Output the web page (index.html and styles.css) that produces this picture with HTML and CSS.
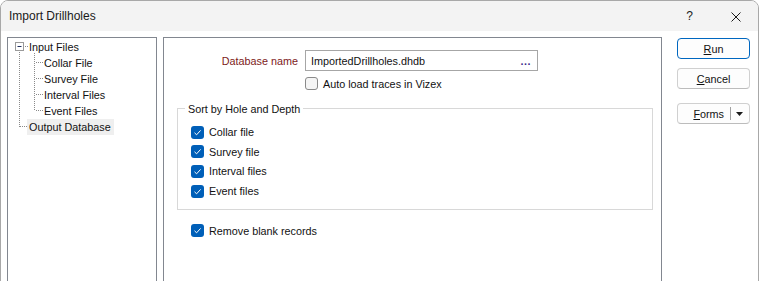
FILE: index.html
```html
<!DOCTYPE html>
<html>
<head>
<meta charset="utf-8">
<link rel="stylesheet" href="styles.css">
</head>
<body>
<div class="window">
  <div class="titlebar">
    <span class="title">Import Drillholes</span>
    <span class="help">?</span>
    <svg class="close" width="10" height="10" viewBox="0 0 10 10"><path d="M0.5 0.5 L9.5 9.5 M9.5 0.5 L0.5 9.5" stroke="#1a1a1a" stroke-width="1"/></svg>
  </div>
  <div class="content">
    <div class="tree">
      <svg class="tree-lines" width="140" height="100" viewBox="0 0 140 100">
        <rect x="7.5" y="4.5" width="8" height="8" fill="#fff" stroke="#9a9a9a"/>
        <path d="M9.5 8.5 H13.5" stroke="#1f2f5f"/>
        <g stroke="#8a8a8a" stroke-dasharray="1 1" fill="none">
          <path d="M17 8.5 H21"/>
          <path d="M11.5 14 V89"/>
          <path d="M12 88.5 H19"/>
          <path d="M26.5 15 V73"/>
          <path d="M28 24.5 H35"/>
          <path d="M28 40.5 H35"/>
          <path d="M28 56.5 H35"/>
          <path d="M28 72.5 H35"/>
        </g>
      </svg>
      <div class="node root">Input Files</div>
      <div class="node child">Collar File</div>
      <div class="node child">Survey File</div>
      <div class="node child">Interval Files</div>
      <div class="node child">Event Files</div>
      <div class="node root"><span class="selected">Output Database</span></div>
    </div>
    <div class="main">
      <div class="db-row">
        <span class="db-label">Database name</span>
        <div class="db-input"><span>ImportedDrillholes.dhdb</span><span class="dots">...</span></div>
      </div>
      <label class="check auto"><span class="box"></span><span>Auto load traces in Vizex</span></label>
      <fieldset class="group">
        <legend>Sort by Hole and Depth</legend>
        <div class="group-body">
          <label class="check"><span class="box on"><svg width="13" height="13" viewBox="0 0 13 13"><path d="M3.5 6.8 L5.6 8.8 L9.6 4.4" stroke="#fff" stroke-width="1" fill="none"/></svg></span><span>Collar file</span></label>
          <label class="check"><span class="box on"><svg width="13" height="13" viewBox="0 0 13 13"><path d="M3.5 6.8 L5.6 8.8 L9.6 4.4" stroke="#fff" stroke-width="1" fill="none"/></svg></span><span>Survey file</span></label>
          <label class="check"><span class="box on"><svg width="13" height="13" viewBox="0 0 13 13"><path d="M3.5 6.8 L5.6 8.8 L9.6 4.4" stroke="#fff" stroke-width="1" fill="none"/></svg></span><span>Interval files</span></label>
          <label class="check"><span class="box on"><svg width="13" height="13" viewBox="0 0 13 13"><path d="M3.5 6.8 L5.6 8.8 L9.6 4.4" stroke="#fff" stroke-width="1" fill="none"/></svg></span><span>Event files</span></label>
        </div>
      </fieldset>
      <label class="check remove"><span class="box on"><svg width="13" height="13" viewBox="0 0 13 13"><path d="M3.5 6.8 L5.6 8.8 L9.6 4.4" stroke="#fff" stroke-width="1" fill="none"/></svg></span><span>Remove blank records</span></label>
    </div>
    <div class="buttons">
      <div class="btn primary"><span><u>R</u>un</span></div>
      <div class="btn"><span><u>C</u>ancel</span></div>
      <div class="btn split"><span class="split-label"><u>F</u>orms</span><span class="sep"></span><svg class="arrow" width="7" height="4" viewBox="0 0 7 4"><path d="M0 0 H7 L3.5 4 Z" fill="#1a1a1a"/></svg></div>
    </div>
  </div>
</div>
</body>
</html>
```

FILE: styles.css
```css
* { box-sizing: border-box; }
html, body { margin: 0; padding: 0; }
body {
  width: 759px;
  height: 281px;
  overflow: hidden;
  background: #fff;
  font-family: "Liberation Sans", Arial, sans-serif;
  font-size: 10.8px;
  color: #111;
}
.window {
  width: 759px;
  height: 290px;
  border: 1px solid #a8a8a8;
  border-radius: 8px 8px 0 0;
  overflow: hidden;
  background: #fff;
}
.titlebar {
  height: 30px;
  background: #f3f3f3;
  display: flex;
  align-items: center;
  padding-left: 8px;
}
.title {
  font-size: 12px;
  flex: 1;
  color: #1a1a1a;
}
.help {
  font-size: 12px;
  margin-right: 38px;
  color: #1a1a1a;
}
.close {
  margin-right: 17px;
  margin-top: 2px;
}
.content {
  display: flex;
  padding: 6px 0 0 6px;
}
.tree {
  position: relative;
  width: 150px;
  height: 260px;
  border: 1px solid #828790;
  border-bottom: none;
  padding-top: 1px;
}
.tree-lines {
  position: absolute;
  left: 0;
  top: 0;
}
.node {
  height: 16px;
  line-height: 16px;
  white-space: nowrap;
}
.node.root { padding-left: 21px; }
.node.child { padding-left: 36px; }
.node.root .selected {
  display: inline-block;
  margin-left: -2px;
  padding: 0 3px 0 2px;
  background: #efefef;
}
.main {
  width: 499px;
  height: 260px;
  margin-left: 6px;
  border: 1px solid #828790;
  border-bottom: none;
  padding-top: 12px;
  display: flex;
  flex-direction: column;
}
.db-row {
  display: flex;
  align-items: center;
}
.db-label {
  width: 134px;
  text-align: right;
  color: #7d1a1a;
}
.db-input {
  margin-left: 7px;
  width: 233px;
  height: 21px;
  border: 1px solid #a6a6a6;
  display: flex;
  align-items: center;
  justify-content: space-between;
  padding: 0 6px 0 5px;
}
.dots {
  color: #3b2c8a;
  font-weight: bold;
  letter-spacing: 0.5px;
}
.check {
  display: flex;
  align-items: center;
  height: 19.7px;
}
.box {
  width: 13px;
  height: 13px;
  border: 1px solid #8a8a8a;
  border-radius: 3px;
  background: #f5f5f5;
  margin-right: 5px;
  flex: none;
  display: flex;
}
.box.on {
  border: none;
  background: #005fb8;
}
.check.auto {
  margin-left: 141px;
  margin-top: 3px;
}
.group {
  margin: 7px 0 0 13px;
  padding: 0;
  width: 476px;
  border: 1px solid #d8d8d8;
  min-inline-size: 0;
}
.group legend {
  margin-left: 7px;
  padding: 0 3px;
  line-height: 16px;
}
.group-body {
  padding: 5.5px 0 8.5px 13px;
}
.check.remove {
  margin-left: 27px;
  margin-top: 10.5px;
}
.buttons {
  margin-left: 15px;
  width: 73px;
  padding-top: 1px;
  display: flex;
  flex-direction: column;
}
.btn {
  height: 21px;
  border: 1px solid #d0d0d0;
  border-bottom-color: #bcbcbc;
  border-radius: 4px;
  background: #fdfdfd;
  display: flex;
  align-items: center;
  justify-content: center;
  margin-bottom: 9px;
}
.btn.primary {
  border: 1px solid #0067c0;
}
.btn.split {
  margin-top: 5px;
  justify-content: flex-end;
  padding-right: 6px;
}
.split-label { margin-right: 6px; }
.sep {
  width: 1px;
  height: 13px;
  background: #a0a0a0;
  margin-right: 5px;
}
.arrow { display: block; }
```
